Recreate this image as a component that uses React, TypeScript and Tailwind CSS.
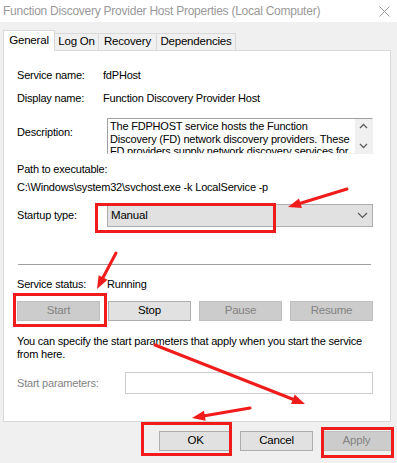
import React from 'react';

const font = { fontFamily: '"Liberation Sans", Arial, sans-serif' };

type Pt = [number, number];

function Arrow({ from, to }: { from: Pt; to: Pt }) {
  const [x1, y1] = from;
  const [x2, y2] = to;
  const a = Math.atan2(y2 - y1, x2 - x1);
  const len = 13;
  const w = 5;
  const bx = x2 - Math.cos(a) * len;
  const by = y2 - Math.sin(a) * len;
  const px = -Math.sin(a) * w;
  const py = Math.cos(a) * w;
  return (
    <g>
      <line x1={x1} y1={y1} x2={bx} y2={by} stroke="#f01c1c" strokeWidth={3} strokeLinecap="round" />
      <polygon points={`${x2},${y2} ${bx + px},${by + py} ${bx - px},${by - py}`} fill="#f01c1c" />
    </g>
  );
}

function Btn({ label, disabled, w = 'w-[83px]' }: { label: string; disabled?: boolean; w?: string }) {
  return (
    <div
      className={`${w} h-[20px] flex items-center justify-center border text-[11.5px] ${
        disabled ? 'bg-[#cccccc] border-[#bfbfbf] text-[#838383]' : 'bg-[#e1e1e1] border-[#adadad] text-black'
      }`}
    >
      {label}
    </div>
  );
}

function Row({ label, children, className = '' }: { label: string; children: React.ReactNode; className?: string }) {
  return (
    <div className={`flex items-center ${className}`}>
      <div className="w-[86px] shrink-0">{label}</div>
      {children}
    </div>
  );
}

function Tab({ label, w, active }: { label: string; w: string; active?: boolean }) {
  return (
    <div
      className={`${w} flex items-center justify-center border border-[#d9d9d9] text-[11.5px] tracking-[-0.2px] ${
        active ? 'h-[21px] bg-white border-b-0' : 'h-[18px] bg-[#f0f0f0] border-l-0'
      }`}
    >
      {label}
    </div>
  );
}

export default function App() {
  return (
    <div
      className="relative w-[397px] h-[463px] overflow-hidden bg-[#f0f0f0] text-[11px] tracking-[-0.2px] text-black"
      style={font}
    >
      {/* Title bar */}
      <div className="h-[22px] bg-white flex items-center justify-between pl-[3px] pr-[6px]">
        <span className="text-[12px] tracking-[-0.25px] text-[#999999]">
          Function Discovery Provider Host Properties (Local Computer)
        </span>
        <svg width="11" height="11" viewBox="0 0 11 11" className="mr-[1px]">
          <path d="M0.5 0.5 L10.5 10.5 M10.5 0.5 L0.5 10.5" stroke="#9a9a9a" strokeWidth="1" />
        </svg>
      </div>

      {/* Tabs */}
      <div className="flex items-end pl-[3px] h-[29px] relative z-10">
        <Tab label="General" w="w-[52px]" active />
        <Tab label="Log On" w="w-[44px]" />
        <Tab label="Recovery" w="w-[58px]" />
        <Tab label="Dependencies" w="w-[79px]" />
      </div>

      {/* Panel */}
      <div className="ml-[3px] w-[388px] h-[372px] -mt-px bg-white border border-[#d9d9d9] pl-[13px] pr-[16px] pt-[16px]">
        <Row label="Service name:" className="h-[16px]">
          <span>fdPHost</span>
        </Row>
        <Row label="Display name:" className="h-[16px] mt-[7px]">
          <span>Function Discovery Provider Host</span>
        </Row>
        <div className="flex mt-[12px]">
          <div className="w-[90px] shrink-0 pt-[6px]">Description:</div>
          <div className="w-[266px] h-[36px] border border-[#a0a0a0] border-r-[#f0f0f0] border-b-[#f0f0f0] flex overflow-hidden">
            <div className="flex-1 min-w-0 overflow-hidden pl-[2px] leading-[12.5px] text-[11px] pt-px whitespace-nowrap">
              The FDPHOST service hosts the Function
              <br />
              Discovery (FD) network discovery providers. These
              <br />
              FD providers supply network discovery services for
            </div>
            <div className="w-[17px] shrink-0 bg-[#f0f0f0] flex flex-col items-center justify-between py-[4px]">
              <svg width="9" height="6" viewBox="0 0 9 6"><path d="M1 5 L4.5 1.5 L8 5" stroke="#606060" strokeWidth="1.3" fill="none" /></svg>
              <svg width="9" height="6" viewBox="0 0 9 6"><path d="M1 1 L4.5 4.5 L8 1" stroke="#606060" strokeWidth="1.3" fill="none" /></svg>
            </div>
          </div>
        </div>
        <div className="mt-[8px] h-[14px] leading-[14px]">Path to executable:</div>
        <div className="mt-[4px] h-[14px] leading-[14px]">C:\Windows\system32\svchost.exe -k LocalService -p</div>
        <div className="flex items-center mt-[10px]">
          <div className="w-[90px] shrink-0">Startup type:</div>
          <div className="w-[266px] h-[23px] bg-[#e1e1e1] border border-[#adadad] flex items-center justify-between pl-[3px] pr-[4px] text-[11.5px]">
            <span>Manual</span>
            <svg width="11" height="7" viewBox="0 0 11 7"><path d="M1 1 L5.5 5.5 L10 1" stroke="#555" strokeWidth="1.1" fill="none" /></svg>
          </div>
        </div>
        <div className="mt-[37px] h-px bg-[#a0a0a0] w-[353px] ml-[1px]" />
        <Row label="Service status:" className="h-[16px] mt-[11px]">
          <span className="ml-[4px]">Running</span>
        </Row>
        <div className="flex gap-[8px] mt-[9px] w-[356px] justify-between">
          <Btn label="Start" disabled />
          <Btn label="Stop" />
          <Btn label="Pause" disabled />
          <Btn label="Resume" disabled />
        </div>
        <div className="mt-[14px] leading-[13px] w-[356px] whitespace-nowrap">
          You can specify the start parameters that apply when you start the service
          <br />
          from here.
        </div>
        <div className="flex items-center mt-[11px]">
          <div className="w-[108px] shrink-0 text-[#838383]">Start parameters:</div>
          <div className="w-[248px] h-[22px] border border-[#cccccc] bg-white" />
        </div>
      </div>

      {/* Bottom buttons */}
      <div className="flex justify-end gap-[8px] pr-[5px] mt-[9px]">
        <Btn label="OK" w="w-[73px]" />
        <Btn label="Cancel" w="w-[73px]" />
        <Btn label="Apply" w="w-[71px]" disabled />
      </div>

      {/* Red annotations */}
      <div className="absolute left-[95px] top-[203px] w-[181px] h-[30px] border-[3px] border-[#f01c1c]" />
      <div className="absolute left-[13px] top-[293px] w-[94px] h-[34px] border-[3px] border-[#f01c1c]" />
      <div className="absolute left-[141px] top-[422px] w-[91px] h-[34px] border-[3px] border-[#f01c1c]" />
      <div className="absolute left-[321px] top-[427px] w-[73px] h-[31px] border-[3px] border-[#f01c1c]" />
      <svg className="absolute left-0 top-0 pointer-events-none" width="397" height="463">
        <Arrow from={[347, 189]} to={[288, 207]} />
        <Arrow from={[116, 253]} to={[97, 289]} />
        <Arrow from={[155, 345]} to={[305, 404]} />
        <Arrow from={[250, 408]} to={[192, 418]} />
      </svg>
    </div>
  );
}
